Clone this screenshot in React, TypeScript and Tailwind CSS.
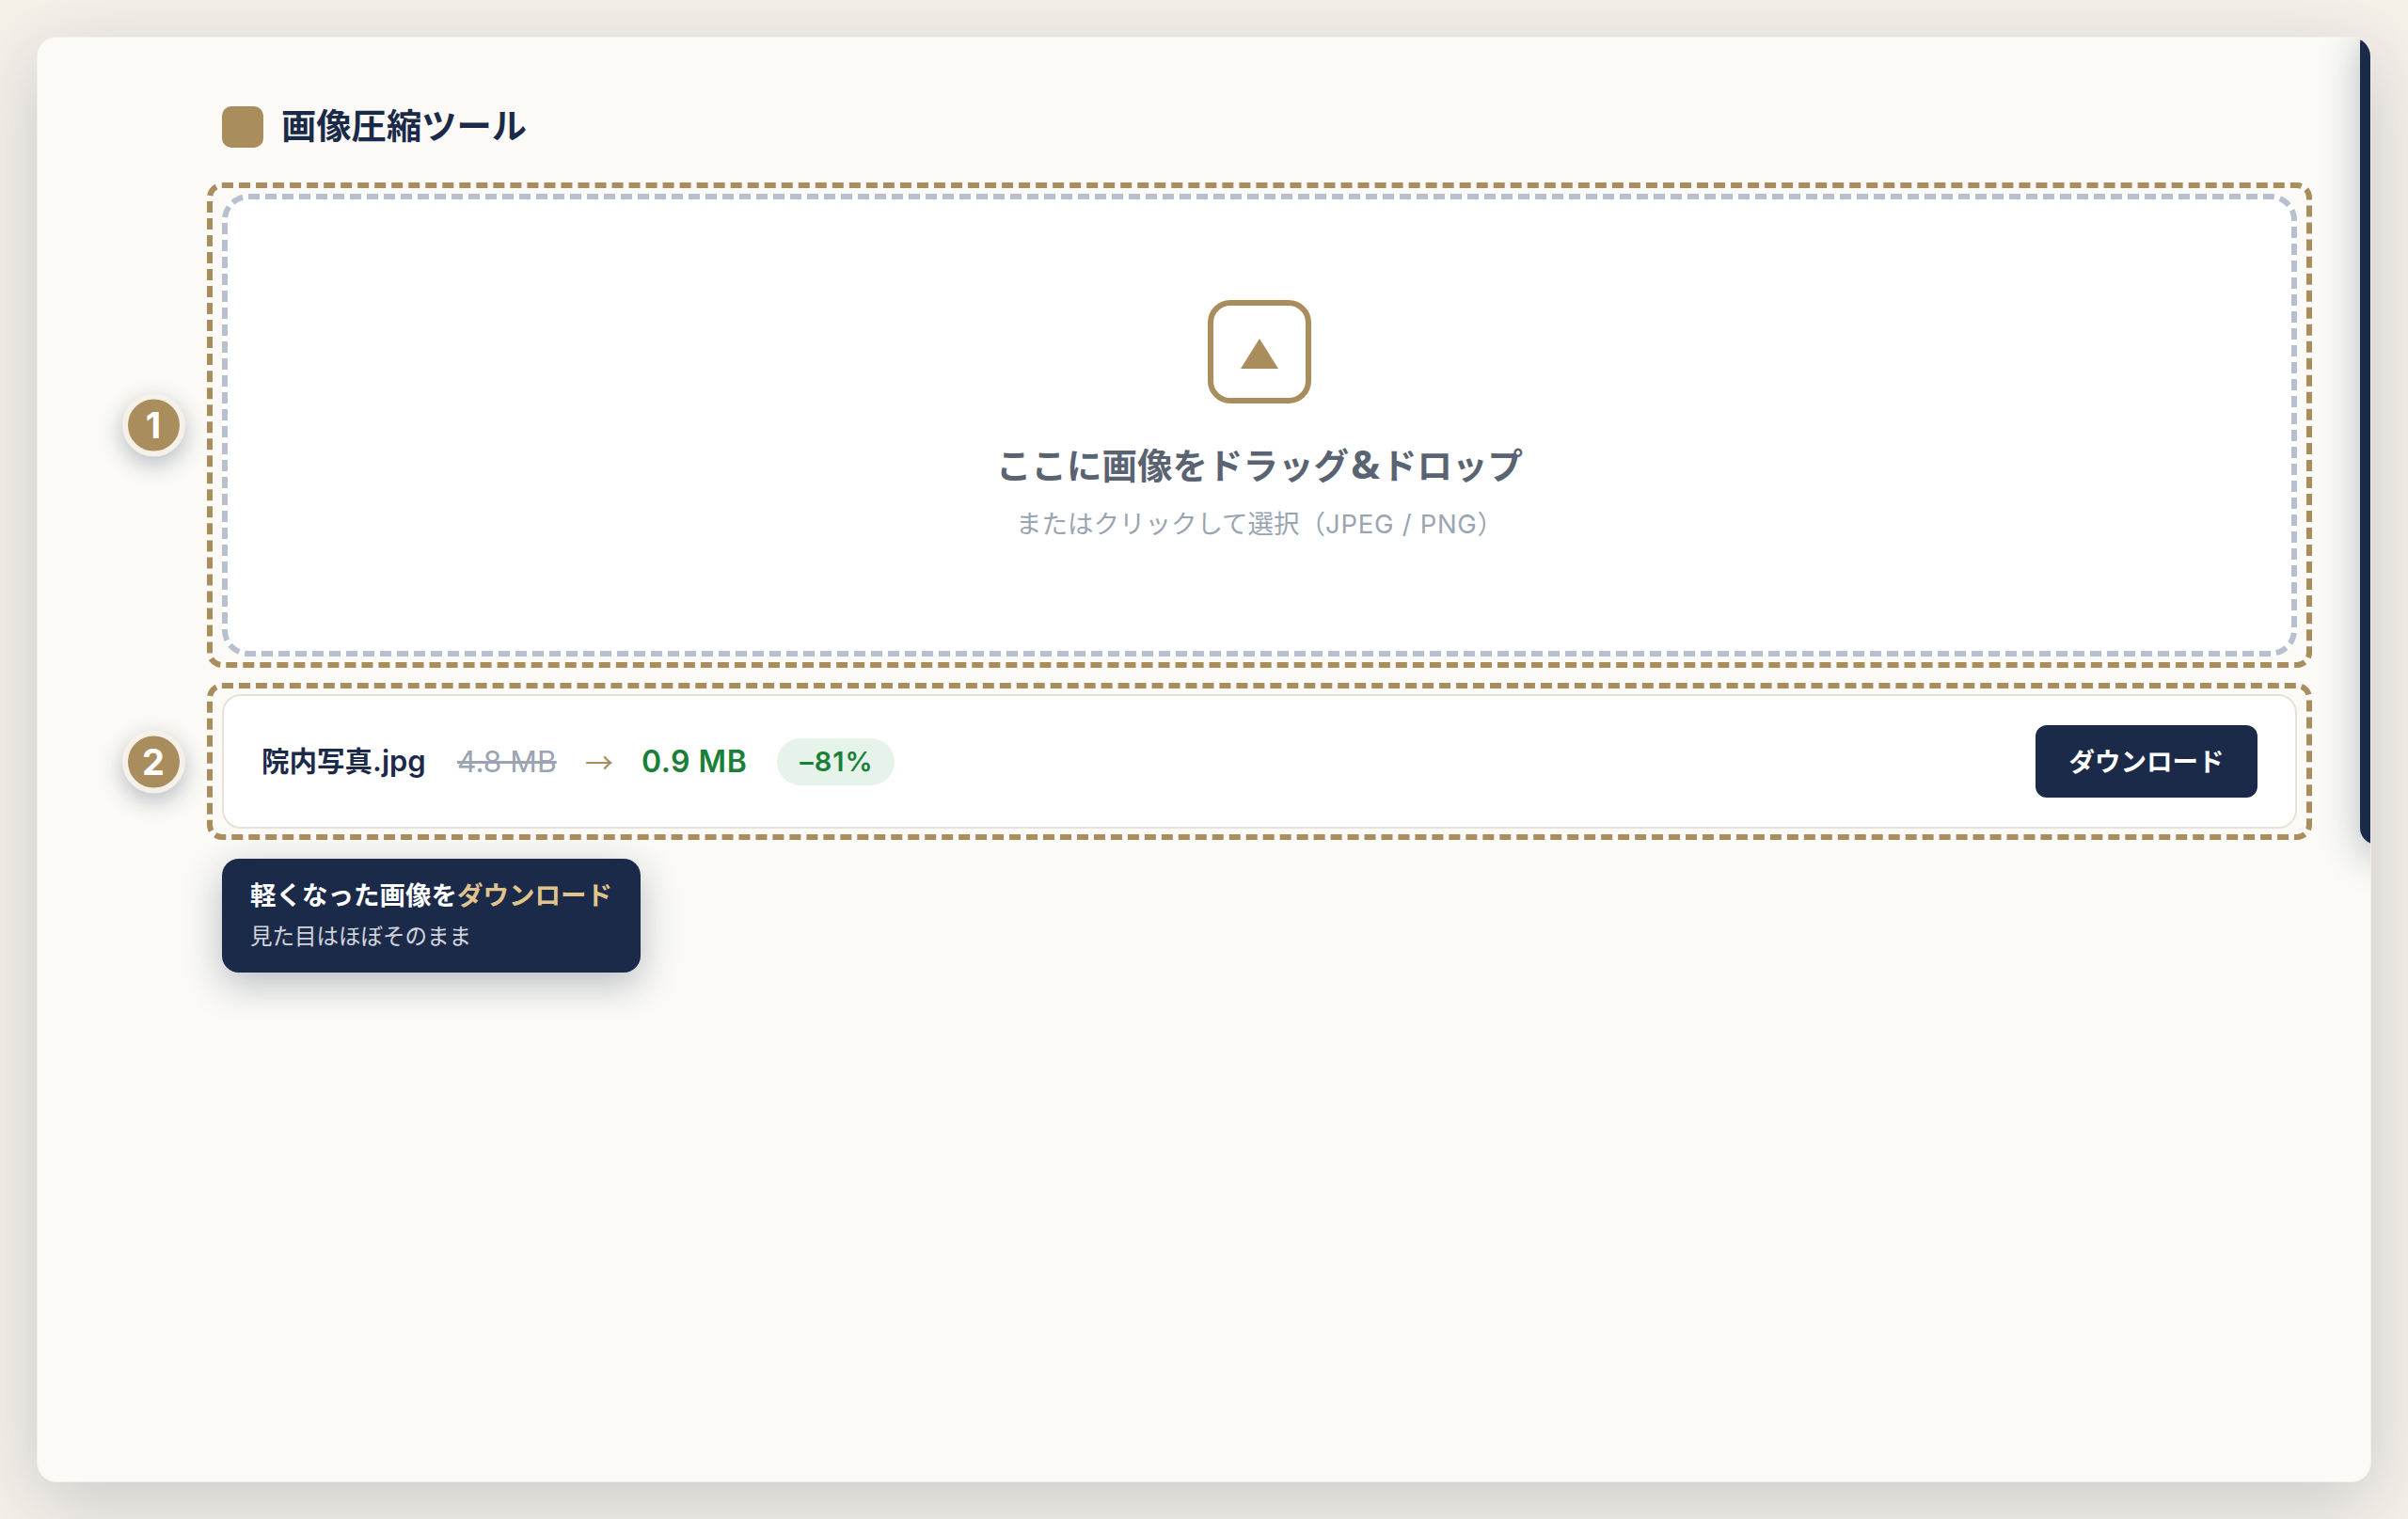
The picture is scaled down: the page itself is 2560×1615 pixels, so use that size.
import type { ReactNode } from "react";

const StepNumber = ({ children }: { children: ReactNode }) => (
  <div className="absolute -left-[106px] top-1/2 flex h-[67px] w-[67px] -translate-y-1/2 items-center justify-center rounded-full border-[6px] border-[#f5f0e8] bg-[#a98d5d] pr-px pb-px font-['Inter','Noto_Sans_CJK_JP',sans-serif] text-[38px] leading-none font-bold text-white shadow-[0_8px_24px_rgba(28,42,74,0.3)]">
    {children}
  </div>
);

const Highlight = () => (
  <div className="pointer-events-none absolute -inset-x-4 -inset-y-3 rounded-2xl border-6 border-dashed border-[#a98d5d]" />
);

const DropZone = () => (
  <div className="relative mt-[49px]">
    <div className="flex h-[492px] flex-col items-center rounded-[28px] border-6 border-dashed border-[#b6c0cf] bg-white pt-[107px]">
      <div className="flex h-[110px] w-[110px] items-center justify-center rounded-3xl border-6 border-[#a98d5d]">
        <svg width="40" height="32" viewBox="0 0 40 32" className="mt-[4px]">
          <path d="M20 0 L40 32 H0 Z" fill="#a98d5d" />
        </svg>
      </div>
      <p className="mt-[37px] text-[37.5px] leading-[54px] font-bold whitespace-nowrap text-[#5a6372]">
        ここに画像をドラッグ
        <span className="inline-block w-[35px] text-center font-['Noto_Sans',sans-serif] text-[41px] leading-none">&</span>
        ドロップ
      </p>
      <p className="mt-[15px] text-[27.5px] leading-[40px] whitespace-nowrap text-[#9aa4b2]">
        またはクリックして選択（
        <span className="font-['Inter',sans-serif] tracking-[0.7px]">JPEG / PNG</span>）
      </p>
    </div>
    <Highlight />
    <StepNumber>1</StepNumber>
  </div>
);

const ResultRow = () => (
  <div className="relative mt-10">
    <div className="flex h-[143px] items-center rounded-[20px] border-2 border-[#e6e2d9] bg-white px-10 font-['Inter','Noto_Sans_CJK_JP',sans-serif]">
      <span className="w-[208px] text-[29.5px] font-semibold whitespace-nowrap text-[#1c2a4a]">
        院内写真<span className="text-[31px]">.jpg</span>
      </span>
      <span className="w-[136px] text-[31.7px] whitespace-nowrap text-[#9aa4b2] line-through">4.8 MB</span>
      <span className="w-[60px] font-['Noto_Sans_CJK_JP',sans-serif] text-[30px] text-[#a98d5d]">→</span>
      <span className="w-[144px] text-[32px] font-semibold tracking-[0.5px] whitespace-nowrap text-[#1a8038]">
        0.9 MB
      </span>
      <span className="flex h-[50px] w-[125px] items-center justify-center rounded-full bg-[#e6f3ea] pl-[2px] text-[29px] font-semibold tracking-[1px] text-[#1a8038]">
        –81%
      </span>
      <button className="ml-auto h-[77px] w-[236px] rounded-xl bg-[#1c2a4a] pb-px font-['Noto_Sans_CJK_JP',sans-serif] text-[27.5px] font-bold whitespace-nowrap text-white">
        ダウンロード
      </button>
    </div>
    <Highlight />
    <StepNumber>2</StepNumber>
  </div>
);

const Tooltip = () => (
  <div className="mt-8 h-[121px] w-[445px] rounded-[18px] bg-[#1c2a4a] px-[30px] pt-[16px] whitespace-nowrap text-white shadow-[0_12px_40px_rgba(28,42,74,0.3)]">
    <p className="text-[27.5px] leading-[42px] font-bold">
      軽くなった画像を<span className="text-[#e0c48c]">ダウンロード</span>
    </p>
    <p className="mt-[5px] text-[23.5px] leading-[36px] text-white/80">見た目はほぼそのまま</p>
  </div>
);

const App = () => {
  return (
    <div className="h-[1615px] w-[2560px] overflow-hidden bg-[#f5f0e8] p-10 font-['Noto_Sans_CJK_JP',sans-serif]">
      <div className="h-[1535px] rounded-[20px] shadow-[0_0_0_1px_rgba(251,250,246,0.6),0_20px_80px_rgba(28,42,74,0.2)]">
        <div className="relative h-full overflow-hidden rounded-[20px] bg-[#fbfaf6] pt-[73px] pr-[78px] pl-[196px]">
          <div className="flex h-11 items-center gap-[19px]">
            <div className="h-11 w-11 rounded-[10px] bg-[#a98d5d]" />
            <h1 className="pb-[5px] text-[37.3px] leading-none font-bold text-[#1c2a4a]">画像圧縮ツール</h1>
          </div>
          <DropZone />
          <ResultRow />
          <Tooltip />
          {/* side callout, cut off by the card edge */}
          <div className="absolute -top-3 left-[2469px] h-[870px] w-[400px] rounded-[18px] bg-[#1c2a4a] shadow-[0_12px_40px_rgba(28,42,74,0.3)]" />
        </div>
      </div>
    </div>
  );
};

export default App;
